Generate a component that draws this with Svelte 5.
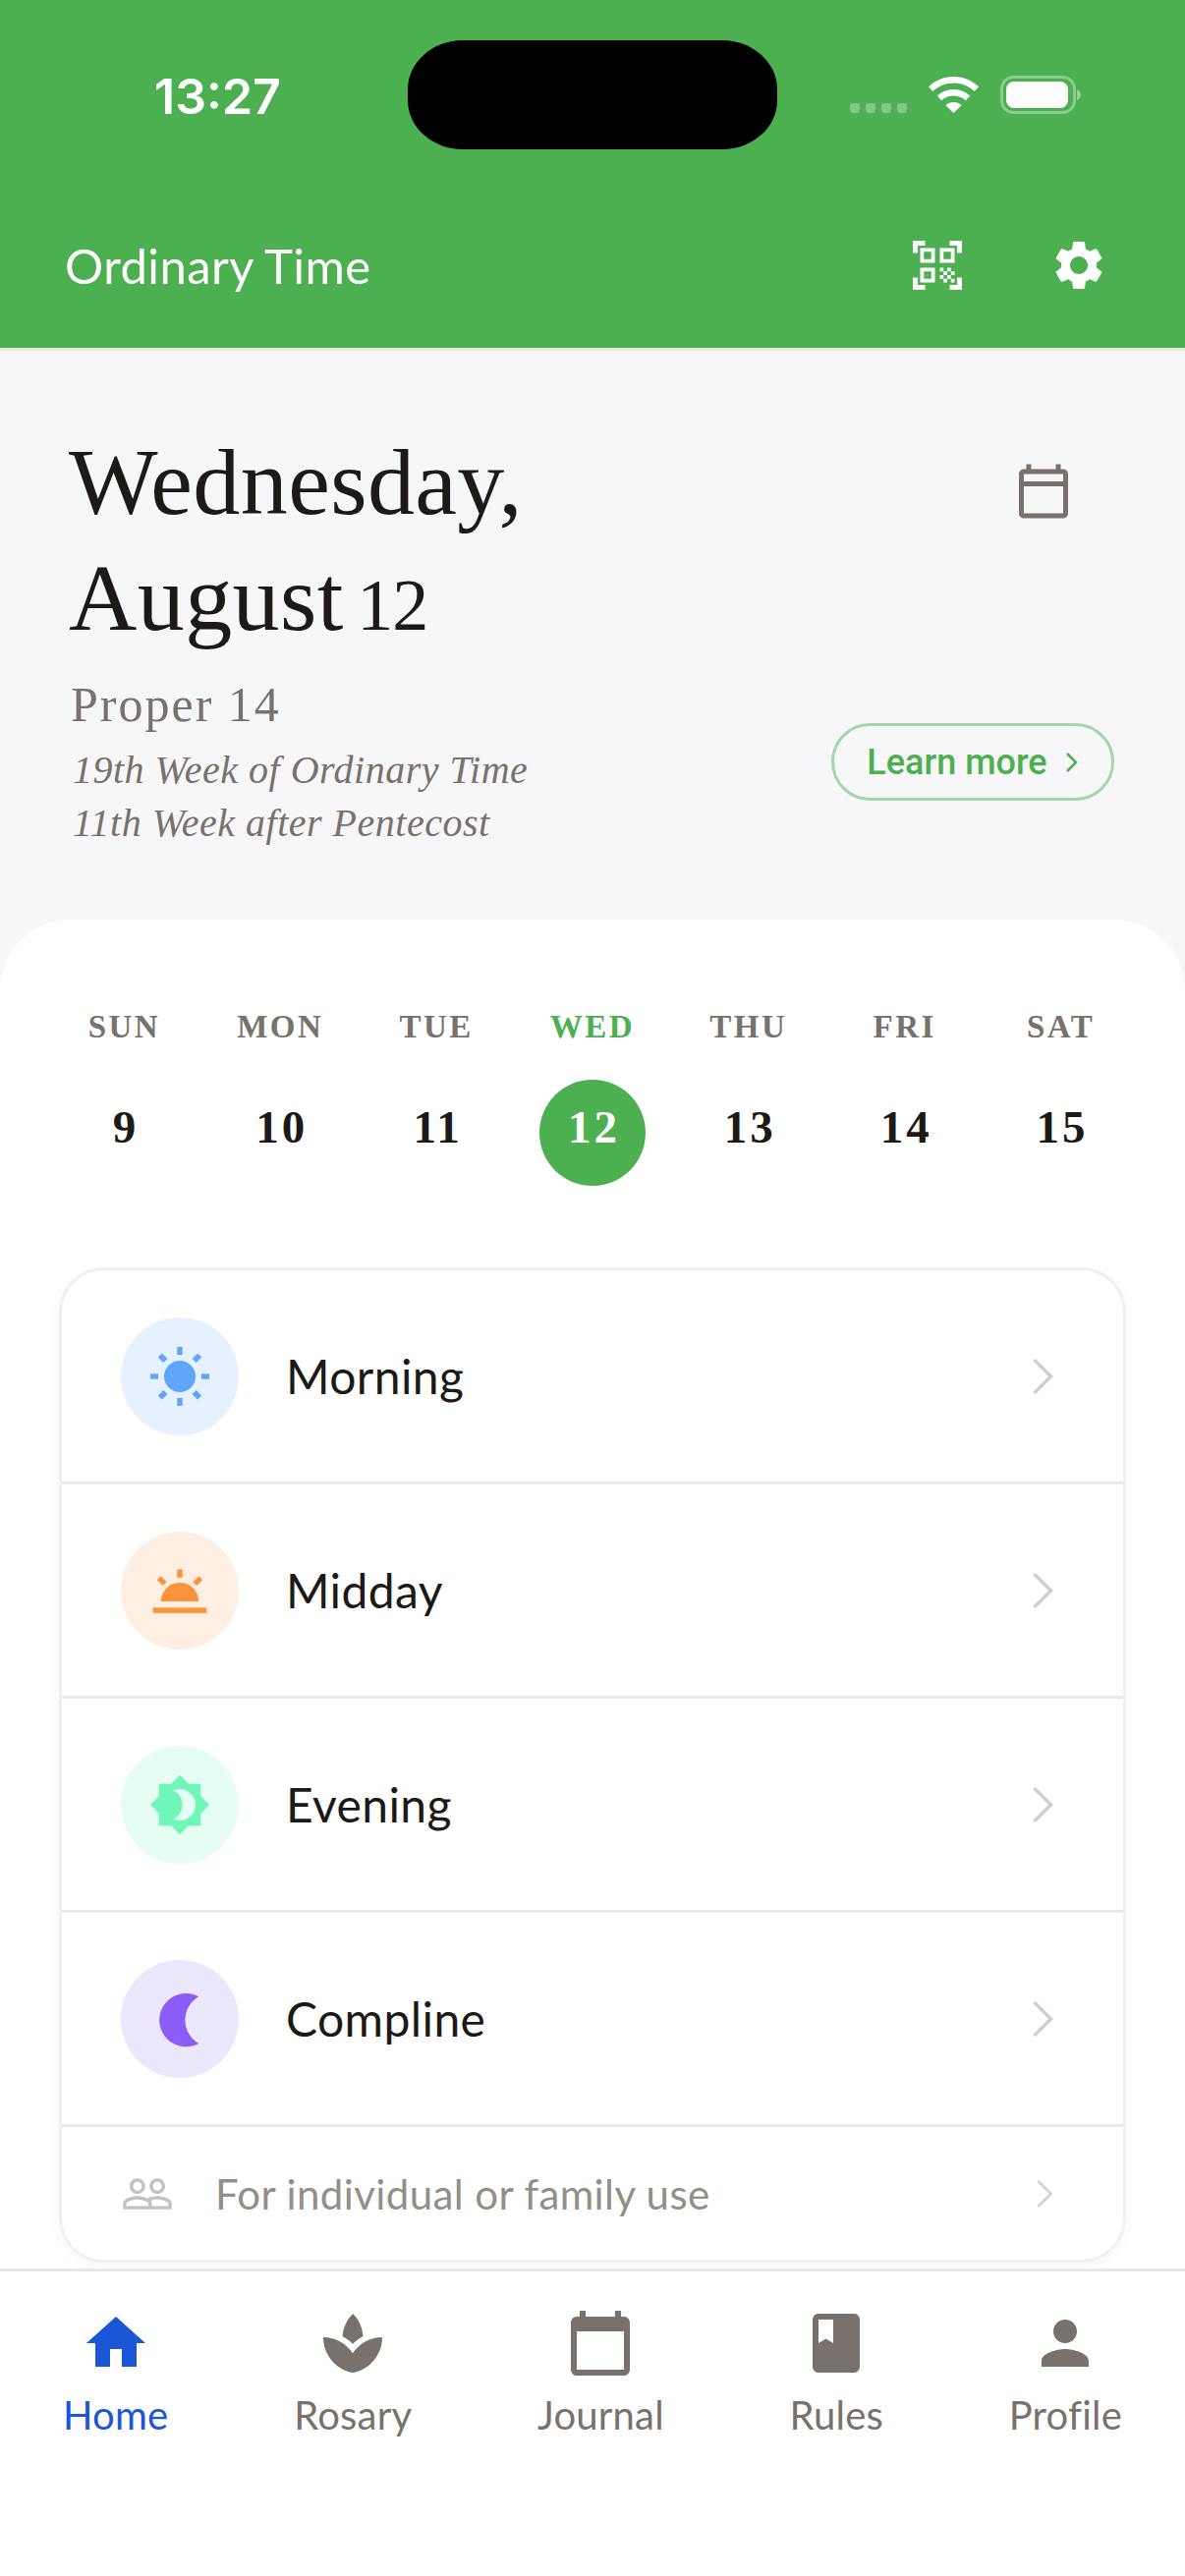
<script>
	// Week strip and the four offices of the day
	const week = [
		{ name: 'SUN', day: 9 },
		{ name: 'MON', day: 10 },
		{ name: 'TUE', day: 11 },
		{ name: 'WED', day: 12, today: true },
		{ name: 'THU', day: 13 },
		{ name: 'FRI', day: 14 },
		{ name: 'SAT', day: 15 }
	];

	const offices = [
		{ label: 'Morning', tone: 'morning' },
		{ label: 'Midday', tone: 'midday' },
		{ label: 'Evening', tone: 'evening' },
		{ label: 'Compline', tone: 'compline' }
	];

	const calendarPath =
		'M20 3h-1V1h-2v2H7V1H5v2H4c-1.1 0-2 .9-2 2v16c0 1.1.9 2 2 2h16c1.1 0 2-.9 2-2V5c0-1.1-.9-2-2-2zm0 18H4V8h16v13z';

	const tabs = [
		{ label: 'Home', active: true, path: 'M10 20v-6h4v6h5v-8h3L12 3 2 12h3v8z' },
		{
			label: 'Rosary',
			path: 'M15.49 9.63c-.18-2.79-1.31-5.51-3.43-7.63-2.14 2.14-3.32 4.86-3.55 7.63 1.28.68 2.46 1.56 3.49 2.63 1.03-1.06 2.21-1.94 3.49-2.63zM12 15.45C9.85 12.17 6.18 10 2 10c0 5.32 3.36 9.82 8.03 11.49.63.23 1.29.4 1.97.51.68-.12 1.33-.29 1.97-.51C18.64 19.82 22 15.32 22 10c-4.18 0-7.85 2.17-10 5.45z'
		},
		{ label: 'Journal', path: calendarPath },
		{
			label: 'Rules',
			path: 'M18 2H6c-1.1 0-2 .9-2 2v16c0 1.1.9 2 2 2h12c1.1 0 2-.9 2-2V4c0-1.1-.9-2-2-2zM6 4h5v8l-2.5-1.5L6 12V4z'
		},
		{
			label: 'Profile',
			path: 'M12 12c2.21 0 4-1.79 4-4s-1.79-4-4-4-4 1.79-4 4 1.79 4 4 4zm0 2c-2.67 0-8 1.34-8 4v2h16v-2c0-2.66-5.33-4-8-4z'
		}
	];
</script>

<div class="phone">
	<header class="appbar">
		<div class="status">
			<span class="clock">13:27</span>
			<span class="island"></span>
			<div class="status-icons">
				<svg class="dots" width="58" height="10" viewBox="0 0 58 10" fill="#fff" opacity=".3">
					<rect width="10" height="10" rx="3" />
					<rect x="16" width="10" height="10" rx="3" />
					<rect x="32" width="10" height="10" rx="3" />
					<rect x="48" width="10" height="10" rx="3" />
				</svg>
				<svg width="51" height="37" viewBox="0 0 51 37" fill="#fff">
					<path d="M25.500 0C15.500 0 6.800 3.900 0 10.300l4.300 4.700C10 9.700 17.300 6.500 25.500 6.500S41 9.700 46.700 15l4.300-4.700C44.200 3.900 35.500 0 25.500 0z" />
					<path d="M25.500 13c-6.500 0-12.300 2.500-16.700 6.600l4.400 4.700c3.200-3 7.500-4.800 12.300-4.800s9.100 1.800 12.300 4.800l4.400-4.700C37.800 15.500 32 13 25.500 13z" />
					<path d="M25.500 26c-3.200 0-6 1.200-8.100 3.200L25.500 37l8.100-7.800c-2.100-2-4.900-3.200-8.100-3.200z" />
				</svg>
				<svg width="82" height="39" viewBox="0 0 82 39">
					<rect x="1.500" y="1.500" width="74" height="36" rx="12" fill="none" stroke="#fff" stroke-opacity=".35" stroke-width="3" />
					<rect x="6" y="6" width="63" height="27" rx="8" fill="#fff" />
					<path d="M78 14c2.500.8 4 3 4 5.500s-1.500 4.700-4 5.500z" fill="#fff" fill-opacity=".4" />
				</svg>
			</div>
		</div>
		<div class="titlebar">
			<span class="title">Ordinary Time</span>
			<div class="actions">
				<svg width="60" height="60" viewBox="0 0 24 24" fill="#fff">
					<path d="M9.500 6.500v3h-3v-3h3M11 5H5v6h6V5zm-1.500 9.500v3h-3v-3h3M11 13H5v6h6v-6zm6.500-6.500v3h-3v-3h3M19 5h-6v6h6V5zm-6 8h1.500v1.500H13V13zm1.500 1.500H16V16h-1.500v-1.500zM16 13h1.500v1.500H16V13zm-3 3h1.500v1.500H13V16zm1.500 1.500H16V19h-1.500v-1.500zM16 16h1.500v1.500H16V16zm1.500-1.500H19V16h-1.500v-1.500zm0 3H19V19h-1.500v-1.500zM22 7h-2V4h-3V2h5v5zm0 15v-5h-2v3h-3v2h5zM2 22h5v-2H4v-3H2v5zM2 2v5h2V4h3V2H2z" />
				</svg>
				<svg width="60" height="60" viewBox="0 0 24 24" fill="#fff">
					<path d="M19.140 12.940c.04-.3.06-.61.06-.94 0-.32-.02-.64-.07-.94l2.030-1.580c.18-.14.23-.41.12-.61l-1.920-3.320c-.12-.22-.37-.29-.59-.22l-2.390.96c-.5-.38-1.030-.7-1.620-.94l-.36-2.540c-.04-.24-.24-.41-.48-.41h-3.840c-.24 0-.43.17-.47.41l-.36 2.540c-.59.24-1.130.57-1.620.94l-2.390-.96c-.22-.08-.47 0-.59.22L2.740 8.870c-.12.21-.08.47.12.61l2.030 1.580c-.05.3-.09.63-.09.94s.02.64.07.94l-2.030 1.580c-.18.14-.23.41-.12.61l1.920 3.320c.12.22.37.29.59.22l2.390-.96c.5.38 1.030.7 1.620.94l.36 2.540c.05.24.24.41.48.41h3.840c.24 0 .44-.17.47-.41l.36-2.540c.59-.24 1.130-.56 1.620-.94l2.390.96c.22.08.47 0 .59-.22l1.920-3.320c.12-.22.07-.47-.12-.61l-2.010-1.580zM12 15.600c-1.980 0-3.600-1.620-3.600-3.600s1.620-3.600 3.600-3.600 3.600 1.620 3.600 3.600-1.620 3.600-3.600 3.600z" />
				</svg>
			</div>
		</div>
	</header>

	<section class="hero">
		<div class="hero-text">
			<h1>Wednesday,<br />August <span class="oldstyle">12</span></h1>
			<p class="proper">Proper 14</p>
			<p class="week first">19th Week of Ordinary Time</p>
			<p class="week">11th Week after Pentecost</p>
		</div>
		<div class="hero-side">
			<svg class="cal" width="60" height="60" viewBox="0 0 24 24" fill="#78716c">
				<path d="M20 3h-1V1h-2v2H7V1H5v2H4c-1.100 0-2 .9-2 2v16c0 1.100.9 2 2 2h16c1.100 0 2-.9 2-2V5c0-1.100-.9-2-2-2zm0 18H4V10h16v11zm0-13H4V5h16v3z" />
			</svg>
			<div class="learn">
				<span>Learn more</span>
				<svg width="14" height="22" viewBox="0 0 14 22" fill="none" stroke="#4caf50" stroke-width="2.500">
					<path d="M2 2l9 9-9 9" />
				</svg>
			</div>
		</div>
	</section>

	<main class="sheet">
		<div class="strip">
			{#each week as d}
				<div class="col" class:today={d.today}>
					<span class="dow">{d.name}</span>
					<span class="num">{d.day}</span>
				</div>
			{/each}
		</div>

		<div class="card">
			{#each offices as o}
				<div class="row">
					<span class="badge {o.tone}">
						{#if o.tone === 'morning'}
							<svg width="72" height="72" viewBox="0 0 24 24" fill="#60a5fa">
								<circle cx="12" cy="12" r="5.350" />
								<rect x="11.100" y="2" width="1.800" height="2.700" />
								<rect x="11.100" y="19.300" width="1.800" height="2.700" />
								<rect x="2" y="11.100" width="2.700" height="1.800" />
								<rect x="19.300" y="11.100" width="2.700" height="1.800" />
								<rect x="4.900" y="4.800" width="2.600" height="1.900" transform="rotate(45 6.200 5.750)" />
								<rect x="16.500" y="4.800" width="2.600" height="1.900" transform="rotate(-45 17.800 5.750)" />
								<rect x="4.900" y="17.300" width="2.600" height="1.900" transform="rotate(-45 6.200 18.250)" />
								<rect x="16.500" y="17.300" width="2.600" height="1.900" transform="rotate(45 17.800 18.250)" />
							</svg>
						{:else if o.tone === 'midday'}
							<svg width="72" height="72" viewBox="0 0 24 24" fill="#fb923c">
								<path d="M5.600 15.700a6.400 6.400 0 0 1 12.800 0z" />
								<rect x="2.900" y="17.800" width="18.200" height="1.800" />
								<rect x="11.100" y="4.800" width="1.800" height="2.800" />
								<rect x="4.500" y="7.800" width="2.800" height="1.800" transform="rotate(45 5.900 8.700)" />
								<rect x="16.700" y="7.800" width="2.800" height="1.800" transform="rotate(-45 18.100 8.700)" />
							</svg>
						{:else if o.tone === 'evening'}
							<svg width="64" height="64" viewBox="0 0 24 24" fill="#6ef7b9">
								<path d="M20 8.690V4h-4.690L12 .69 8.690 4H4v4.690L.69 12 4 15.310V20h4.690L12 23.310 15.310 20H20v-4.690L23.310 12 20 8.690zM12 18c-.89 0-1.740-.2-2.500-.55C11.560 16.500 13 14.420 13 12s-1.440-4.500-3.500-5.450C10.260 6.200 11.110 6 12 6c3.310 0 6 2.690 6 6s-2.690 6-6 6z" />
							</svg>
						{:else}
							<svg width="72" height="72" viewBox="0 0 24 24" fill="#8b5cf6">
								<path d="M18.440 4.440A9.050 9.050 0 1 0 18.440 20.330A9.130 9.130 0 0 1 18.440 4.440Z" />
							</svg>
						{/if}
					</span>
					<span class="label">{o.label}</span>
					<svg class="chev" width="22" height="38" viewBox="0 0 22 38" fill="none" stroke="#cfcfcf" stroke-width="3.500">
						<path d="M2.500 2l17 17-17 17" />
					</svg>
				</div>
			{/each}
			<div class="foot">
				<svg width="54" height="54" viewBox="0 0 24 24" fill="#c4c2c0">
					<path d="M16.500 13c-1.200 0-3.070.34-4.500 1-1.430-.67-3.300-1-4.500-1C5.330 13 1 14.080 1 16.250V19h22v-2.750c0-2.170-4.330-3.250-6.500-3.250zm-4 4.500h-10v-1.250c0-.54 2.560-1.750 5-1.750s5 1.210 5 1.750v1.250zm9 0H14v-1.250c0-.46-.2-.86-.52-1.220.88-.3 1.960-.53 3.020-.53 2.440 0 5 1.210 5 1.750v1.250zM7.500 12c1.930 0 3.500-1.570 3.500-3.500S9.430 5 7.500 5 4 6.570 4 8.500 5.570 12 7.500 12zm0-5.500c1.100 0 2 .9 2 2s-.9 2-2 2-2-.9-2-2 .9-2 2-2zm9 5.500c1.930 0 3.500-1.570 3.500-3.500S18.430 5 16.500 5 13 6.570 13 8.500s1.570 3.500 3.500 3.500zm0-5.500c1.100 0 2 .9 2 2s-.9 2-2 2-2-.9-2-2 .9-2 2-2z" />
				</svg>
				<span class="foot-text">For individual or family use</span>
				<svg class="chev small" width="18" height="30" viewBox="0 0 18 30" fill="none" stroke="#d4d4d4" stroke-width="3">
					<path d="M2.500 2l13 13-13 13" />
				</svg>
			</div>
		</div>
	</main>

	<nav class="tabs">
		{#each tabs as t}
			<div class="tab" class:active={t.active}>
				<svg width="72" height="72" viewBox="0 0 24 24" fill="currentColor"><path d={t.path} /></svg>
				<span>{t.label}</span>
			</div>
		{/each}
	</nav>
</div>

<style>
	:global(body) {
		background: #fff;
	}

	.phone {
		width: 1206px;
		height: 2622px;
		display: flex;
		flex-direction: column;
		overflow: hidden;
		background: #f7f7f9;
		font-family: Lato, 'Open Sans', sans-serif;
	}

	/* green bar */
	.appbar {
		height: 354px;
		flex: none;
		box-sizing: content-box;
		background: #4caf50;
		border-bottom: 3px solid #e8e8e8;
		color: #fff;
	}

	.status {
		display: flex;
		align-items: center;
		height: 111px;
		padding: 41px 0 0 157px;
	}

	.clock {
		width: 130px;
		font: 600 50px/1 Inter, sans-serif;
		margin-top: 2px;
		white-space: nowrap;
	}

	.island {
		width: 376px;
		height: 111px;
		margin-left: 128px;
		background: #000;
		border-radius: 56px / 50px;
	}

	.status-icons {
		display: flex;
		align-items: center;
		gap: 22px;
		margin-left: 74px;
	}

	.dots {
		margin-top: 26px;
	}

	.titlebar {
		display: flex;
		align-items: center;
		justify-content: space-between;
		height: 60px;
		margin-top: 88px;
		padding: 0 78px 0 66px;
	}

	.title {
		font-size: 49px;
		font-weight: 400;
		letter-spacing: 0.4px;
	}

	.actions {
		display: flex;
		gap: 84px;
	}

	/* date block */
	.hero {
		height: 579px;
		flex: none;
		display: flex;
		justify-content: space-between;
		padding: 0 72px 0 70px;
		box-sizing: border-box;
		font-family: 'Liberation Serif', serif;
	}

	h1 {
		margin: 75px 0 0;
		font-size: 96px;
		font-weight: 400;
		line-height: 118px;
		letter-spacing: 0.4px;
		word-spacing: -11px;
		color: #1c1917;
	}

	.oldstyle {
		font-size: 74px;
		letter-spacing: -1px;
	}

	.proper {
		margin: 12px 0 0 2px;
		font-size: 50px;
		line-height: 60px;
		color: #78716c;
		letter-spacing: 2px;
	}

	.week {
		margin: 0 0 0 4px;
		font-size: 40px;
		line-height: 54px;
		font-style: italic;
		color: #78716c;
		letter-spacing: 0.5px;
	}

	.week.first {
		margin-top: 10px;
	}

	.hero-side {
		display: flex;
		flex-direction: column;
		align-items: flex-end;
	}

	.cal {
		margin: 113px 42px 0 0;
	}

	.learn {
		display: flex;
		align-items: center;
		justify-content: center;
		gap: 18px;
		width: 288px;
		height: 79px;
		margin-top: 206px;
		box-sizing: border-box;
		border: 3px solid #a5d6a7;
		border-radius: 40px;
		color: #4caf50;
		font: 500 36px/1 Roboto, sans-serif;
	}

	/* white sheet */
	.sheet {
		flex: 1;
		min-height: 0;
		background: #fff;
		border-radius: 72px 72px 0 0;
		padding: 0 60px;
	}

	.strip {
		display: grid;
		grid-template-columns: repeat(7, 1fr);
		margin: 0 -13px;
		padding-top: 89px;
		font-family: 'Liberation Serif', serif;
		font-weight: 700;
	}

	.col {
		display: flex;
		flex-direction: column;
		align-items: center;
	}

	.dow {
		font-size: 33px;
		line-height: 40px;
		letter-spacing: 2.5px;
		color: #78716c;
	}

	.today .dow {
		color: #4caf50;
	}

	.num {
		display: flex;
		align-items: center;
		justify-content: center;
		width: 108px;
		height: 108px;
		box-sizing: border-box;
		padding: 0 0 12px 3px;
		margin-top: 34px;
		border-radius: 50%;
		font-size: 47px;
		letter-spacing: 3px;
		color: #1c1917;
	}

	.today .num {
		background: #4caf50;
		color: #fff;
	}

	.card {
		margin-top: 83px;
		border: 3px solid #f1f0ef;
		border-radius: 46px;
		box-shadow: 0 4px 14px rgba(0, 0, 0, 0.04);
		background: #fff;
		overflow: hidden;
	}

	.row {
		display: flex;
		align-items: center;
		height: 218px;
		box-sizing: border-box;
		padding-left: 60px;
		border-bottom: 3px solid #e9e9e9;
	}

	.badge {
		display: flex;
		align-items: center;
		justify-content: center;
		width: 120px;
		height: 120px;
		border-radius: 50%;
		flex: none;
	}

	.morning {
		background: #e5f1ff;
	}

	.midday {
		background: #ffefe3;
	}

	.evening {
		background: #e6fdf3;
	}

	.compline {
		background: #ede7fd;
	}

	.label {
		margin-left: 48px;
		font-size: 48px;
		letter-spacing: 0.4px;
		color: #1c1917;
		flex: 1;
	}

	.chev {
		margin-right: 71px;
	}

	.foot {
		display: flex;
		align-items: center;
		height: 135px;
		padding-left: 60px;
	}

	.foot-text {
		margin-left: 42px;
		flex: 1;
		font-size: 42px;
		letter-spacing: 0.4px;
		color: #938e8a;
	}

	.chev.small {
		margin-right: 71px;
	}

	/* bottom tabs */
	.tabs {
		height: 313px;
		flex: none;
		box-sizing: border-box;
		display: flex;
		justify-content: space-between;
		padding: 37px 64px 0;
		background: #fff;
		border-top: 3px solid #e8e8e8;
		color: #78716c;
	}

	.tab {
		display: flex;
		flex-direction: column;
		align-items: center;
		font-size: 40px;
		letter-spacing: 0.2px;
		line-height: 46px;
		gap: 14px;
	}

	.tab.active {
		color: #1a56d6;
	}
</style>
